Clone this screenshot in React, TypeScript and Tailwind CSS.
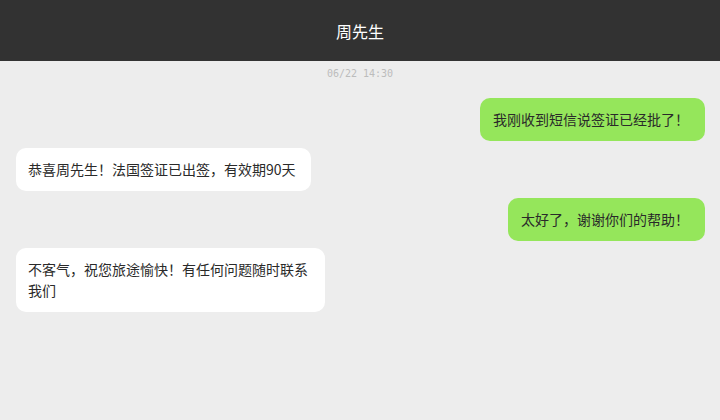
type Msg = { from: 'me' | 'them'; text: string };

const messages: Msg[] = [
  { from: 'me', text: '我刚收到短信说签证已经批了！' },
  { from: 'them', text: '恭喜周先生！法国签证已出签，有效期90天' },
  { from: 'me', text: '太好了，谢谢你们的帮助！' },
  { from: 'them', text: '不客气，祝您旅途愉快！有任何问题随时联系我们' },
];

export default function App() {
  return (
    <div
      className="w-[720px] h-[420px] flex flex-col bg-[#ededed] overflow-hidden"
      style={{ fontFamily: '"Noto Sans CJK SC", "Noto Sans", sans-serif' }}
    >
      {/* title bar */}
      <div className="h-[61px] shrink-0 bg-[#323232] flex items-center justify-center">
        <span className="text-white text-[16px]">周先生</span>
      </div>

      <div className="flex flex-col px-4">
        <div className="h-[23px] flex items-center justify-center pt-[1px]">
          <span
            className="text-[10px] text-[#bcbcbc]"
            style={{ fontFamily: '"DejaVu Sans Mono", monospace' }}
          >
            06/22 14:30
          </span>
        </div>

        <div className="flex flex-col gap-[7px] pt-[14px]">
          {messages.map((m, i) => (
            <div key={i} className={m.from === 'me' ? 'flex justify-end -mr-px' : 'flex justify-start'}>
              <div
                className={
                  'max-w-[309px] rounded-[10px] py-[11px] text-[14px] leading-[21px] text-[#2a2a2a] ' +
                  (m.from === 'me' ? 'bg-[#95e65b] pl-[13px] pr-[16px]' : 'bg-white pl-[12px] pr-[15px]')
                }
              >
                {m.text}
              </div>
            </div>
          ))}
        </div>
      </div>
    </div>
  );
}
